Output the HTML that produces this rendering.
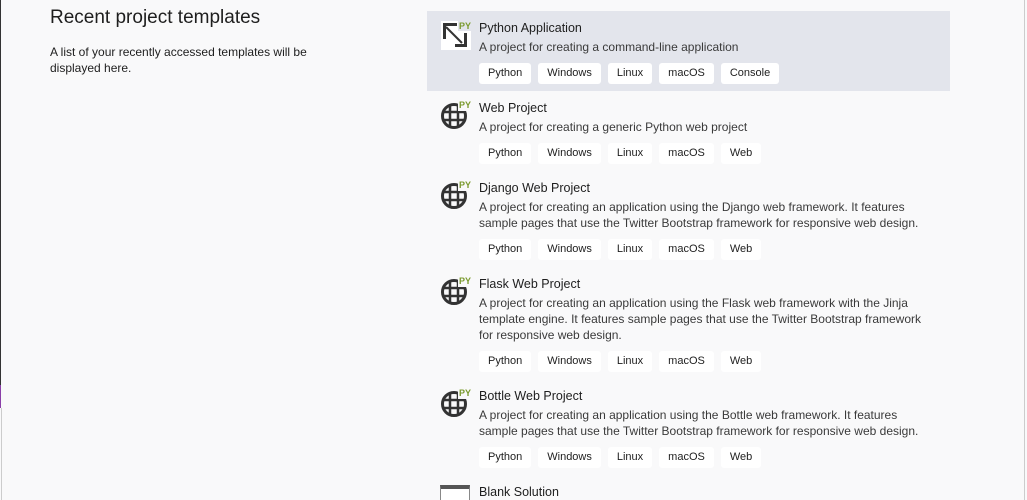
<!DOCTYPE html>
<html><head><style>
html,body{margin:0;width:1027px;height:500px;overflow:hidden}
body{background:#f9f9fa;font-family:"Liberation Sans",sans-serif;color:#1e1e1e;position:relative}
.lb{position:absolute;left:0;top:0;width:1px;height:385px;background:#333}
.lp{position:absolute;left:0;top:385px;width:1px;height:23px;background:#8a3fa8}
.lg{position:absolute;left:1px;top:408px;width:1px;height:92px;background:#ccc}
.rb{position:absolute;left:1024px;top:0;width:1px;height:500px;background:#ccc}
h1{position:absolute;left:50px;top:7px;margin:0;font-weight:normal;font-size:19px;color:#1e1e1e}
.note{position:absolute;left:50px;top:44px;width:270px;font-size:12px;line-height:16px}
.item{position:absolute;left:427px;width:523px}
.sel{background:#e3e5ec}
.t{position:absolute;left:52px;top:10px;font-size:12.5px}
.d{position:absolute;left:52px;top:28px;font-size:12px;line-height:16px;color:#3a3a3a;width:445px}
.tags{position:absolute;left:52px;display:flex;gap:7px}
.tags span{background:#fff;border-radius:3px;height:21px;line-height:21px;font-size:11px;padding:0 9px}
.ic{position:absolute;left:13px;top:8px}
</style></head><body>
<div class="lb"></div><div class="lp"></div><div class="lg"></div><div class="rb"></div>
<h1>Recent project templates</h1>
<div class="note">A list of your recently accessed templates will be displayed here.</div>

<div class="item sel" style="top:11px;height:80px">
<svg class="ic" width="32" height="32" viewBox="0 0 32 32"><path d="M1 2h17v10h13v19H1z" fill="#fff"/><path d="M3 4h14v3H6v13H3z" fill="#333"/><path d="M6 8l16 16" stroke="#333" stroke-width="2"/><path d="M27 14v14H15v-3h9V14z" fill="#333"/><text x="19" y="10" font-size="9" font-weight="bold" fill="#7a9a2e" font-family="Liberation Sans">PY</text></svg>
<div class="t">Python Application</div>
<div class="d">A project for creating a command-line application</div>
<div class="tags" style="top:52px"><span>Python</span><span>Windows</span><span>Linux</span><span>macOS</span><span>Console</span></div>
</div>

<div class="item" style="top:91px;height:80px">
<svg class="ic" width="32" height="32" viewBox="0 0 32 32"><circle cx="14" cy="17" r="11.5" fill="none" stroke="#333" stroke-width="3"/><path d="M3 13h22M3 21h22M10 6v22M18 6v22" stroke="#333" stroke-width="2.5"/><rect x="18" y="0" width="14" height="12" fill="#f9f9fa"/><text x="19" y="9" font-size="9" font-weight="bold" fill="#7a9a2e" font-family="Liberation Sans">PY</text></svg>
<div class="t">Web Project</div>
<div class="d">A project for creating a generic Python web project</div>
<div class="tags" style="top:52px"><span>Python</span><span>Windows</span><span>Linux</span><span>macOS</span><span>Web</span></div>
</div>

<div class="item" style="top:171px;height:96px">
<svg class="ic" width="32" height="32" viewBox="0 0 32 32"><circle cx="14" cy="17" r="11.5" fill="none" stroke="#333" stroke-width="3"/><path d="M3 13h22M3 21h22M10 6v22M18 6v22" stroke="#333" stroke-width="2.5"/><rect x="18" y="0" width="14" height="12" fill="#f9f9fa"/><text x="19" y="9" font-size="9" font-weight="bold" fill="#7a9a2e" font-family="Liberation Sans">PY</text></svg>
<div class="t">Django Web Project</div>
<div class="d">A project for creating an application using the Django web framework. It features sample pages that use the Twitter Bootstrap framework for responsive web design.</div>
<div class="tags" style="top:68px"><span>Python</span><span>Windows</span><span>Linux</span><span>macOS</span><span>Web</span></div>
</div>

<div class="item" style="top:267px;height:112px">
<svg class="ic" width="32" height="32" viewBox="0 0 32 32"><circle cx="14" cy="17" r="11.5" fill="none" stroke="#333" stroke-width="3"/><path d="M3 13h22M3 21h22M10 6v22M18 6v22" stroke="#333" stroke-width="2.5"/><rect x="18" y="0" width="14" height="12" fill="#f9f9fa"/><text x="19" y="9" font-size="9" font-weight="bold" fill="#7a9a2e" font-family="Liberation Sans">PY</text></svg>
<div class="t">Flask Web Project</div>
<div class="d">A project for creating an application using the Flask web framework with the Jinja template engine. It features sample pages that use the Twitter Bootstrap framework<br>for responsive web design.</div>
<div class="tags" style="top:84px"><span>Python</span><span>Windows</span><span>Linux</span><span>macOS</span><span>Web</span></div>
</div>

<div class="item" style="top:379px;height:96px">
<svg class="ic" width="32" height="32" viewBox="0 0 32 32"><circle cx="14" cy="17" r="11.5" fill="none" stroke="#333" stroke-width="3"/><path d="M3 13h22M3 21h22M10 6v22M18 6v22" stroke="#333" stroke-width="2.5"/><rect x="18" y="0" width="14" height="12" fill="#f9f9fa"/><text x="19" y="9" font-size="9" font-weight="bold" fill="#7a9a2e" font-family="Liberation Sans">PY</text></svg>
<div class="t">Bottle Web Project</div>
<div class="d">A project for creating an application using the Bottle web framework. It features sample pages that use the Twitter Bootstrap framework for responsive web design.</div>
<div class="tags" style="top:68px"><span>Python</span><span>Windows</span><span>Linux</span><span>macOS</span><span>Web</span></div>
</div>

<div class="item" style="top:475px;height:25px;overflow:hidden">
<div style="position:absolute;left:13px;top:10px;width:28px;height:20px;border:1px solid #888;border-top:4px solid #555;background:#fff"></div>
<div class="t">Blank Solution</div>
</div>
</body></html>
